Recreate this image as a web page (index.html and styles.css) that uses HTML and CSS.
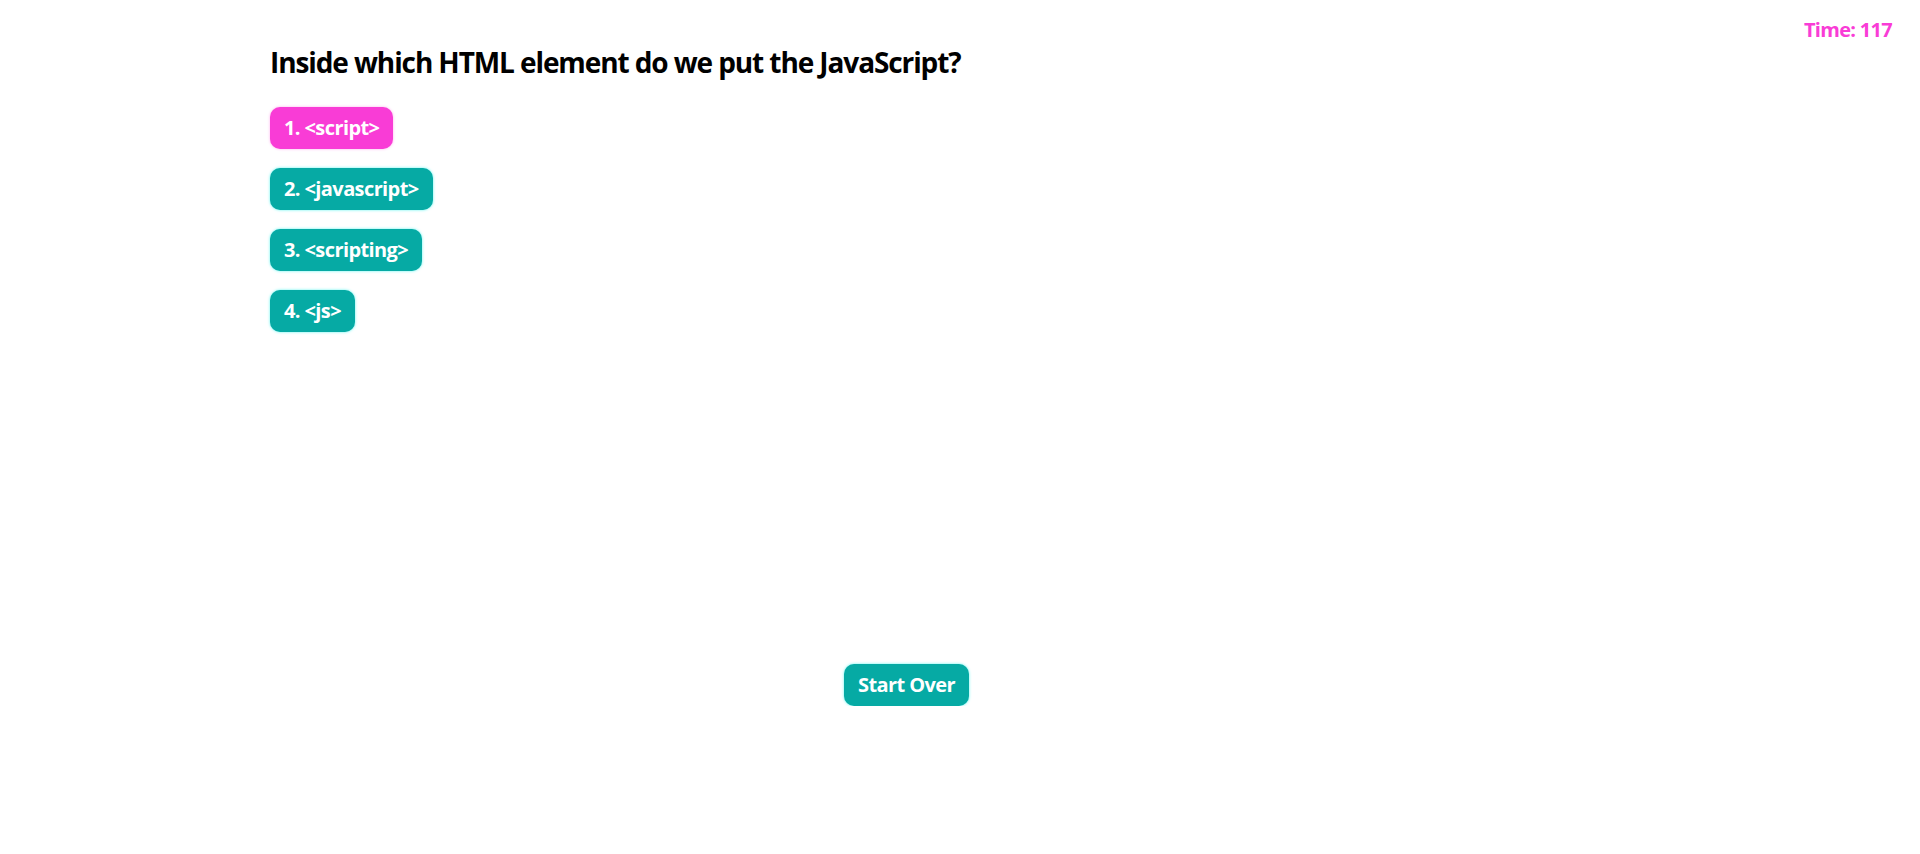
FILE: index.html
```html
<!DOCTYPE html>
<html lang="en">
<head>
<meta charset="utf-8">
<title>Quiz</title>
<link rel="stylesheet" href="styles.css">
</head>
<body>
<header class="topbar">
  <span class="timer">Time: 117</span>
</header>
<main class="quiz">
  <h1 class="question">Inside which HTML element do we put the JavaScript?</h1>
  <div class="choices">
    <button class="choice choice-selected">1. &lt;script&gt;</button>
    <button class="choice">2. &lt;javascript&gt;</button>
    <button class="choice">3. &lt;scripting&gt;</button>
    <button class="choice">4. &lt;js&gt;</button>
  </div>
  <div class="footer">
    <button class="choice">Start Over</button>
  </div>
</main>
</body>
</html>
```
FILE: styles.css
```css
html, body {
  margin: 0;
  padding: 0;
  background: #ffffff;
}
body {
  font-family: "Open Sans", "Liberation Sans", sans-serif;
  color: #000000;
}
.topbar {
  display: flex;
  justify-content: flex-end;
  padding: 16px 28px 0 0;
  height: 27px;
}
.timer {
  font-size: 20px;
  font-weight: 700;
  line-height: 27px;
  letter-spacing: -0.7px;
  color: #f93cd6;
}
.quiz {
  margin-left: 270px;
  width: 1273px;
}
.question {
  margin: 0;
  font-size: 28px;
  font-weight: 700;
  line-height: 38px;
  letter-spacing: -1.1px;
}
.choices {
  margin-top: 26px;
  display: flex;
  flex-direction: column;
  align-items: flex-start;
  gap: 19px;
}
.choice {
  font-family: "Open Sans", "Liberation Sans", sans-serif;
  font-size: 20px;
  font-weight: 700;
  line-height: 28px;
  letter-spacing: -0.6px;
  color: #ffffff;
  background: #06aaa4;
  border: 0;
  border-radius: 10px;
  padding: 7px 14px;
  box-shadow: 0 0 3px #5ff5f0;
  cursor: pointer;
}
.choice-selected {
  background: #f93cd6;
  box-shadow: 0 0 3px #ffb0ee;
}
.footer {
  margin-top: 332px;
  display: flex;
  justify-content: center;
}
```
